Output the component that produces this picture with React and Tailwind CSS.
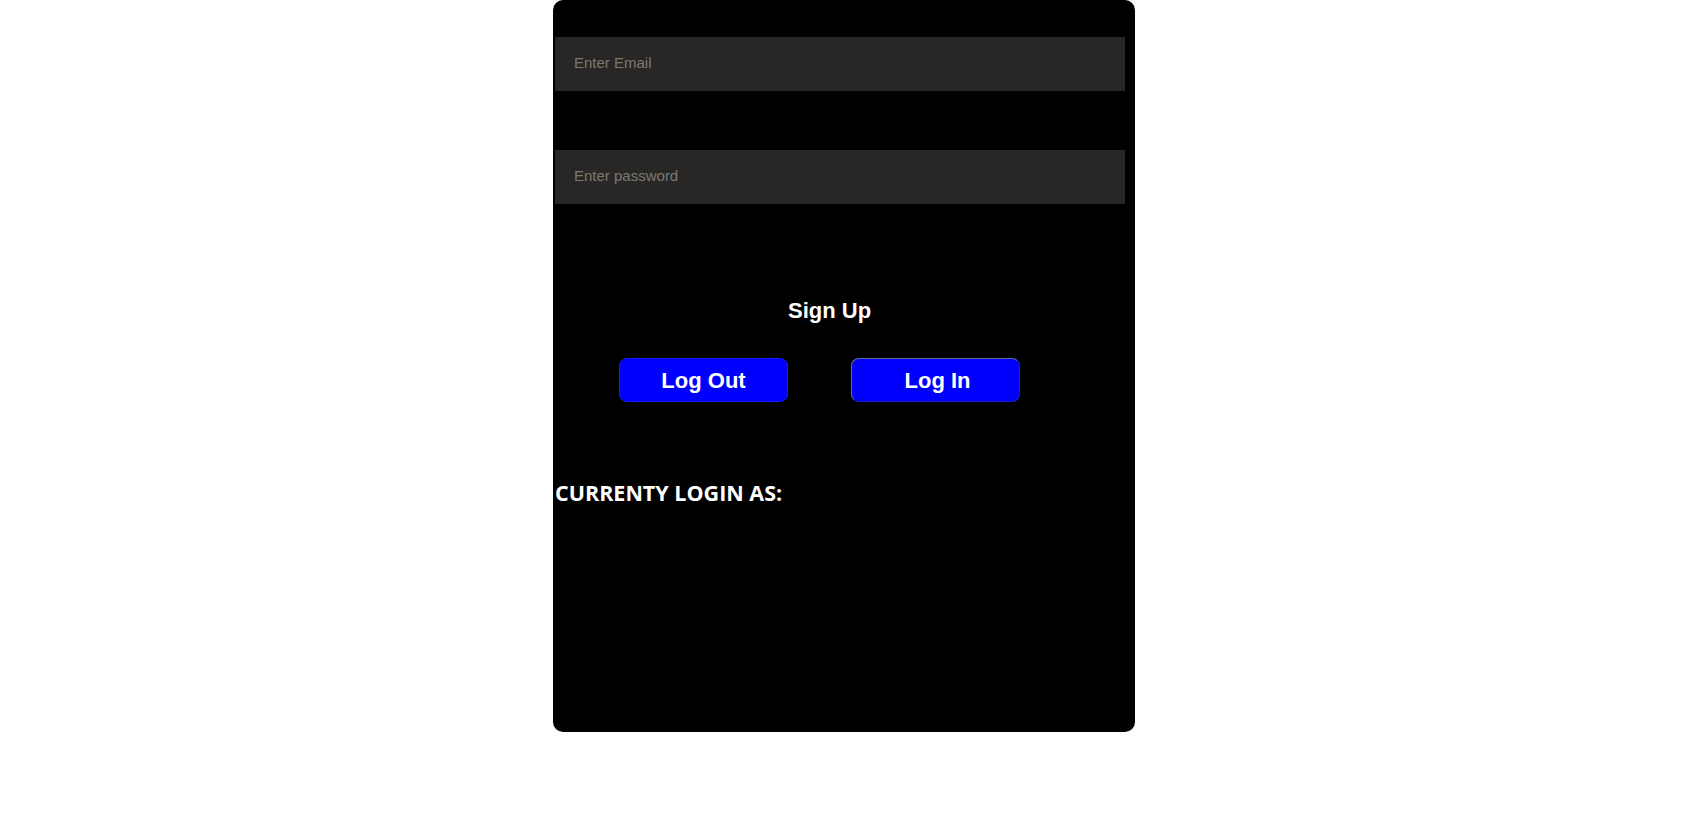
export default function App() {
  return (
    <div className="min-h-[813px] w-full bg-white">
      <div className="mx-auto flex h-[732px] w-[582px] flex-col rounded-[10px] bg-black pl-[2px] pr-[10px] pt-[37px] font-['Liberation_Sans',Arial,sans-serif]">
        <input
          type="email"
          placeholder="Enter Email"
          className="h-[54px] w-full bg-[#292725] px-[19px] pb-[3px] text-[15px] text-white outline-none placeholder:text-[#7b7976]"
        />
        <input
          type="password"
          placeholder="Enter password"
          className="mt-[59px] h-[54px] w-full bg-[#292725] px-[19px] pb-[3px] text-[15px] text-white outline-none placeholder:text-[#7b7976]"
        />

        <div className="mt-[94px] pl-[233px] text-[22px] font-bold leading-[26px] text-white">
          Sign Up
        </div>

        <div className="mt-[34px] flex gap-[63px] pl-[64px]">
          <button className="h-[44px] w-[169px] rounded-[8px] border border-[#1a1aff] bg-[#0000ff] text-[22px] font-bold text-white">
            Log Out
          </button>
          <button className="h-[44px] w-[169px] rounded-[8px] border border-t-[#6b6b8a] border-l-[#6b6b8a] border-r-[#2020c0] border-b-[#2020c0] bg-[#0000ff] pl-[4px] text-[22px] font-bold text-white">
            Log In
          </button>
        </div>

        <div className="mt-[77px] font-['Open_Sans','Noto_Sans',sans-serif] text-[21.5px] font-bold leading-[28px] text-white">
          CURRENTY LOGIN AS:
        </div>
      </div>
    </div>
  );
}
